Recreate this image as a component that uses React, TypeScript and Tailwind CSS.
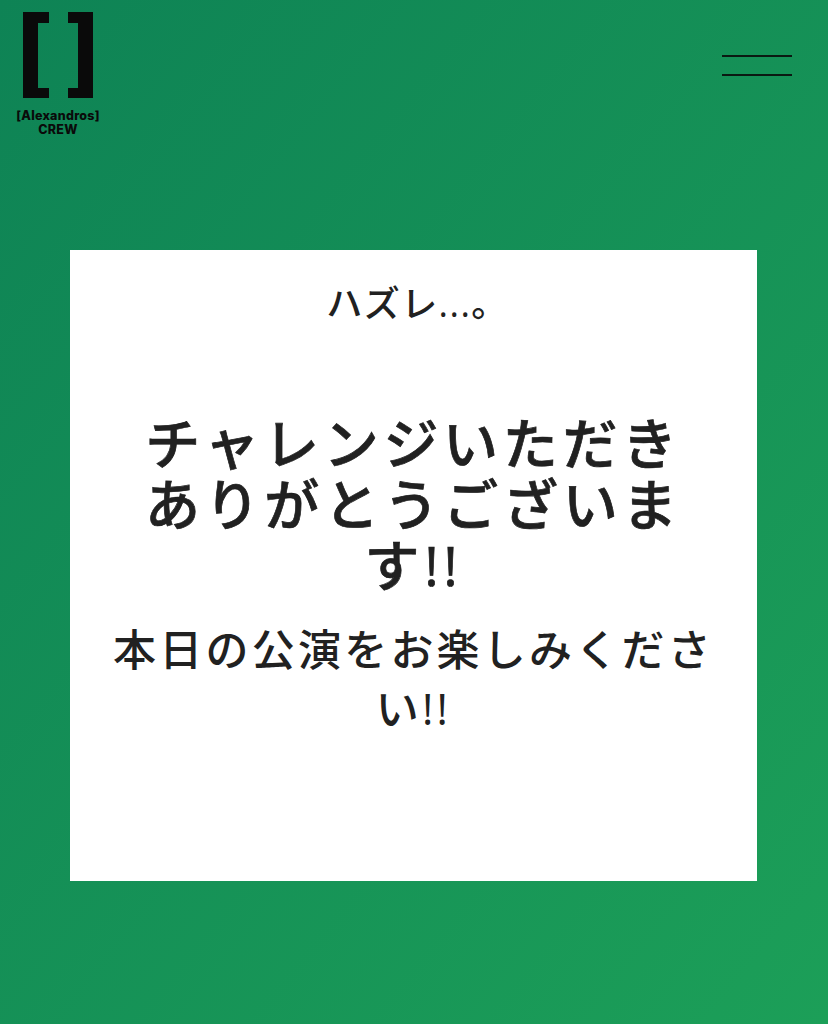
import React from "react";

const jpFont = "[font-family:'Open_Sans','Noto_Sans_CJK_JP',sans-serif]";

function Logo() {
  return (
    <div className="flex w-[84px] flex-col items-center">
      <svg width="71" height="86" viewBox="0 0 71 86" fill="#0a0a0a" aria-hidden="true">
        <path d="M0 0H26V11H15V76H26V86H0Z" />
        <path d="M45 0H70V86H45V76H55V11H45Z" />
      </svg>
      <div className="mt-[11px] whitespace-nowrap text-center font-['Inter',sans-serif] text-[12.5px] leading-[14px] font-extrabold tracking-[0.25px] text-[#0a0a0a]">
        <div>[Alexandros]</div>
        <div>CREW</div>
      </div>
    </div>
  );
}

export default function App() {
  return (
    <div className={`flex h-[1024px] w-full flex-col overflow-hidden bg-gradient-to-br from-[#0e8355] to-[#1c9f58] ${jpFont}`}>
      <header className="flex h-[250px] shrink-0 items-start justify-between pt-3 pr-9 pl-4">
        <Logo />
        <button className="mt-[43px] flex w-[70px] flex-col gap-[17px]" aria-label="menu">
          <span className="h-0.5 bg-[#0a1a12]" />
          <span className="h-0.5 bg-[#0a1a12]" />
        </button>
      </header>

      <main className="ml-[70px] flex h-[631px] w-[687px] flex-col items-center bg-white px-[30px] text-center text-[#212121]">
        <p className="mt-[30px] pl-2 text-[36px] leading-[48px] font-medium tracking-[0.04em]">ハズレ...。</p>
        <h1 className="mt-[84px] w-[580px] text-[55px] leading-[61px] font-medium tracking-[0.085em] [-webkit-text-stroke:0.7px_#212121]">
          チャレンジいただきありがとうございます!!
        </h1>
        <p className="mt-[25px] text-[43px] leading-[59px] font-medium tracking-[0.075em]">
          本日の公演をお楽しみくださ<wbr />い!!
        </p>
      </main>
    </div>
  );
}
